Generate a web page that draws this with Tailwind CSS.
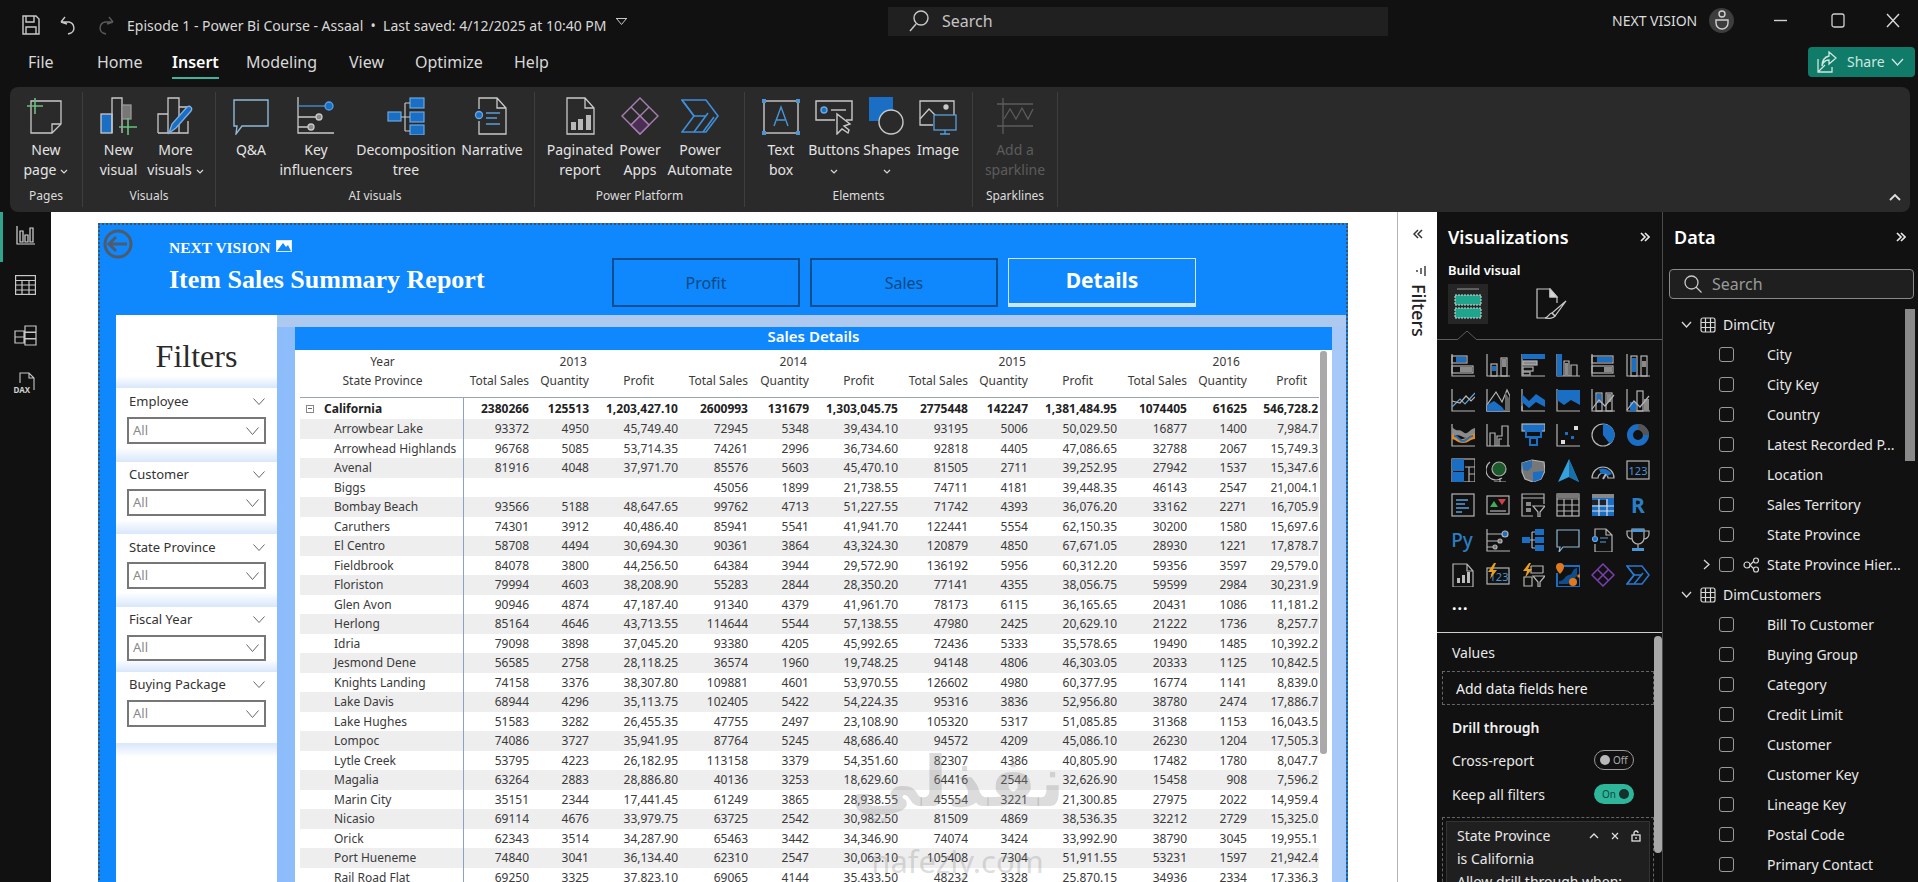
<!DOCTYPE html>
<html lang="en">
<head>
  <meta charset="UTF-8">
  <title>Power BI - Item Sales Summary Report</title>
  <script src="https://cdn.jsdelivr.net/npm/@tailwindcss/browser@4"></script>
</head>
<body class="w-[1918px] h-[882px] overflow-hidden bg-[#111111] text-[#e8e8e8] font-['Noto_Sans',sans-serif] flex flex-col">

  <!-- title bar -->
  <header class="h-[50px] flex items-center shrink-0">
    <div class="w-[888px] flex items-center pl-[22px] text-[#cfcfcf]">
      <svg class="w-[18px] h-[20px]" viewBox="0 0 18 20" fill="none" stroke="#c8c8c8" stroke-width="1.4"><path d="M1 1h13l3 3v15H1z"/><path d="M4 1v6h8V1M4 19v-7h10v7"/></svg>
      <svg class="w-[17px] h-[20px] ml-[20px]" viewBox="0 0 17 20" fill="none" stroke="#c8c8c8" stroke-width="1.4"><path d="M1 7l4-5M1 7l6 2M1 7h8a6 6 0 0 1 2 11l-3 1"/></svg>
      <svg class="w-[17px] h-[20px] ml-[20px]" viewBox="0 0 17 20" fill="none" stroke="#5a5a5a" stroke-width="1.4"><path d="M16 7l-4-5M16 7l-6 2M16 7H8a6 6 0 0 0-2 11l3 1"/></svg>
      <span class="ml-[13px] text-[14px] whitespace-nowrap text-[#d8d8d8]">Episode 1 - Power Bi Course - Assaal &nbsp;•&nbsp; Last saved: 4/12/2025 at 10:40 PM</span>
      <svg class="w-[11px] h-[8px] ml-[9px] -mt-[6px]" viewBox="0 0 11 8" fill="none" stroke="#c8c8c8"><path d="M.5.5h10l-5 6z"/><path d="M0 .5h11"/></svg>
    </div>
    <div class="w-[500px] h-[29px] -mt-[8px] bg-[#202020] flex items-center pl-[21px]">
      <svg class="w-[20px] h-[22px]" viewBox="0 0 20 22" fill="none" stroke="#c8c8c8" stroke-width="1.4"><circle cx="12" cy="8" r="7"/><path d="M7 14l-6 7"/></svg>
      <span class="ml-[13px] text-[16px] text-[#c4c4c4]">Search</span>
    </div>
    <div class="flex-1 flex items-center -mt-[10px] pl-[224px]">
      <span class="text-[14px] whitespace-nowrap text-[#dcdcdc]">NEXT VISION</span>
      <div class="ml-[12px] w-[25px] h-[25px] rounded-full bg-[#3d3d3d] flex items-center justify-center">
        <svg class="w-[16px] h-[20px]" viewBox="0 0 16 20" fill="none" stroke="#d0d0d0" stroke-width="1.4"><circle cx="8" cy="4" r="3"/><path d="M2 10h12v3a6 6 0 0 1-12 0z"/></svg>
      </div>
      <svg class="w-[13px] h-[3px] ml-[40px]" viewBox="0 0 13 3"><path d="M0 1.5h13" stroke="#d0d0d0" stroke-width="1.4"/></svg>
      <svg class="w-[14px] h-[15px] ml-[44px]" viewBox="0 0 14 15" fill="none" stroke="#d0d0d0" stroke-width="1.3"><rect x="1" y="1" width="12" height="13" rx="2"/></svg>
      <svg class="w-[14px] h-[15px] ml-[41px]" viewBox="0 0 14 15" fill="none" stroke="#d8d8d8" stroke-width="1.4"><path d="M1 1l12 13M13 1L1 14"/></svg>
    </div>
  </header>

  <!-- menu tabs -->
  <nav class="h-[37px] flex items-start shrink-0 text-[16px] text-[#d8d8d8] leading-[24px]">
    <span class="ml-[28px] w-[69px]">File</span>
    <span class="w-[75px]">Home</span>
    <span class="w-[74px] font-semibold text-white"><span class="inline-block border-b-2 border-[#3cb59c] pb-[3px]">Insert</span></span>
    <span class="w-[103px]">Modeling</span>
    <span class="w-[66px]">View</span>
    <span class="w-[99px]">Optimize</span>
    <span>Help</span>
    <div class="ml-auto mr-[3px] -mt-[3px] w-[107px] h-[30px] rounded-[4px] bg-[#0f7b68] flex items-center pl-[9px] text-[14px] text-[#cfe6e0]">
      <svg class="w-[20px] h-[22px]" viewBox="0 0 20 22" fill="none" stroke="#cfe6e0" stroke-width="1.3"><path d="M1 8v13h14v-5M1 21l7-7"/><path d="M12 1l7 6-7 6V9c-4 0-6 2-7 6 0-6 3-9 7-10z"/></svg>
      <span class="ml-[10px]">Share</span>
      <svg class="w-[13px] h-[8px] ml-[6px]" viewBox="0 0 13 8" fill="none" stroke="#cfe6e0" stroke-width="1.3"><path d="M1 1l5.500 6L12 1"/></svg>
    </div>
  </nav>

  <!-- ribbon -->
  <section class="relative h-[125px] ml-[10px] mr-[8px] shrink-0 bg-[#2a2a2a] rounded-[8px] flex pt-[5px] text-[14px] leading-[20px] text-[#e4e4e4] text-center">

    <div class="w-[73px] h-[115px] border-r border-[#3e3e3e] flex flex-col">
      <div class="h-[95px] flex">
        <div class="w-[72px] pt-[5px] flex flex-col items-center">
          <svg class="w-[38px] h-[38px]" viewBox="0 0 38 38" fill="none" stroke="#c9c9c9" stroke-width="1.3"><path d="M4 4h30v23l-9 9H4z"/><path d="M34 27h-9v9"/><path d="M0 9h16M8 1v16" stroke="#6bbf80" stroke-width="1.6"/></svg>
          <div class="mt-[5px]">New<br>page<svg class="inline w-[8px] h-[5px] ml-[4px]" viewBox="0 0 8 5" fill="none" stroke="#d8d8d8" stroke-width="1.200"><path d="M1 1l3 3 3-3"/></svg></div>
        </div>
      </div>
      <div class="text-[12px] leading-[18px] text-[#dcdcdc]">Pages</div>
    </div>

    <div class="w-[133px] h-[115px] border-r border-[#3e3e3e] flex flex-col">
      <div class="h-[95px] flex pl-[7px]">
        <div class="w-[57px] pt-[5px] flex flex-col items-center">
          <svg class="w-[38px] h-[38px]" viewBox="0 0 38 38" fill="none" stroke="#c9c9c9" stroke-width="1.3"><rect x="1" y="17" width="11" height="19" fill="#1a6fc4" stroke="#c9c9c9"/><path d="M12 36V1h10v35"/><rect x="22" y="8" width="9" height="14" fill="#777" stroke="#999"/><path d="M19 30h18M28 21v17" stroke="#6bbf80" stroke-width="1.6"/></svg>
          <div class="mt-[5px]">New<br>visual</div>
        </div>
        <div class="w-[57px] pt-[5px] flex flex-col items-center">
          <svg class="w-[38px] h-[38px]" viewBox="0 0 38 38" fill="none" stroke="#c9c9c9" stroke-width="1.3"><path d="M1 36V17h10M11 36V1h11v35M22 10h8v4M1 36h30v-12"/><path d="M12 36l3-9 15-17c3-2 6 1 4 4L19 31z" fill="#1a6fc4" stroke="#7fb2e0"/></svg>
          <div class="mt-[5px] whitespace-nowrap">More<br>visuals<svg class="inline w-[8px] h-[5px] ml-[4px]" viewBox="0 0 8 5" fill="none" stroke="#d8d8d8" stroke-width="1.200"><path d="M1 1l3 3 3-3"/></svg></div>
        </div>
      </div>
      <div class="text-[12px] leading-[18px] text-[#dcdcdc]">Visuals</div>
    </div>

    <div class="w-[319px] h-[115px] border-r border-[#3e3e3e] flex flex-col">
      <div class="h-[95px] flex pl-[4px]">
        <div class="w-[62px] pt-[5px] flex flex-col items-center">
          <svg class="w-[38px] h-[38px]" viewBox="0 0 38 38" fill="none" stroke="#8fb9d8" stroke-width="1.4"><path d="M2 3h34v26H10l-6 8 1-8H2z"/></svg>
          <div class="mt-[5px]">Q&amp;A</div>
        </div>
        <div class="w-[68px] pt-[5px] flex flex-col items-center">
          <svg class="w-[38px] h-[38px]" viewBox="0 0 38 38" fill="none" stroke="#c9c9c9" stroke-width="1.3"><path d="M1 0v36h36"/><path d="M1 9h28" stroke="#4a94d8"/><circle cx="32" cy="9" r="4" fill="#1a6fc4" stroke="#5aa0e0"/><path d="M1 20h19M1 30h11"/><circle cx="22" cy="20" r="3" fill="#888"/><circle cx="14" cy="30" r="3" fill="#888"/></svg>
          <div class="mt-[5px]">Key<br>influencers</div>
        </div>
        <div class="w-[112px] pt-[5px] flex flex-col items-center">
          <svg class="w-[38px] h-[38px]" viewBox="0 0 38 38" fill="#1a6fc4" stroke="#6aa8e0" stroke-width="1.2"><rect x="1" y="15" width="13" height="9"/><rect x="23" y="1" width="14" height="10"/><rect x="23" y="15" width="14" height="10"/><rect x="23" y="28" width="14" height="10"/><path d="M14 20h9M18 6v28M18 6h5M18 34h5" fill="none" stroke="#c9c9c9"/></svg>
          <div class="mt-[5px]">Decomposition<br>tree</div>
        </div>
        <div class="w-[60px] pt-[5px] flex flex-col items-center">
          <svg class="w-[38px] h-[38px]" viewBox="0 0 38 38" fill="none" stroke="#c9c9c9" stroke-width="1.3"><path d="M6 12V1h18l9 10v26H6v-13M24 1v10h9"/><circle cx="6" cy="18" r="3.500" fill="#1a6fc4" stroke="#6aa8e0"/><path d="M13 16h14M13 21h11M13 27h14" stroke="#5a9fd8"/></svg>
          <div class="mt-[5px]">Narrative</div>
        </div>
      </div>
      <div class="text-[12px] leading-[18px] text-[#dcdcdc]">AI visuals</div>
    </div>

    <div class="w-[210px] h-[115px] border-r border-[#3e3e3e] flex flex-col">
      <div class="h-[95px] flex pl-[11px]">
        <div class="w-[68px] pt-[5px] flex flex-col items-center">
          <svg class="w-[38px] h-[38px]" viewBox="0 0 38 38" fill="none" stroke="#c9c9c9" stroke-width="1.3"><path d="M6 37V1h18l9 10v26zM24 1v10h9"/><path d="M10 33v-8h5v8zM17 33V22h5v11zM25 33V18h5v15z" fill="#b8b8b8" stroke="none"/></svg>
          <div class="mt-[5px]">Paginated<br>report</div>
        </div>
        <div class="w-[52px] pt-[5px] flex flex-col items-center">
          <svg class="w-[38px] h-[38px]" viewBox="0 0 38 38" fill="none" stroke="#a77fb5" stroke-width="1.4"><path d="M19 1l18 18-18 18L1 19z"/><path d="M10 10l18 18M28 10L10 28"/><path d="M19 19l9 9-9 9-9-9z" fill="#4a2f52"/></svg>
          <div class="mt-[5px]">Power<br>Apps</div>
        </div>
        <div class="w-[68px] pt-[5px] flex flex-col items-center">
          <svg class="w-[38px] h-[38px]" viewBox="0 0 38 38" fill="none" stroke="#3f8ed8" stroke-width="1.6"><path d="M1 3h24l12 16-12 16H1l12-16z"/><path d="M13 35l14-19M22 35l11-15M1 3l12 16h12"/></svg>
          <div class="mt-[5px]">Power<br>Automate</div>
        </div>
      </div>
      <div class="text-[12px] leading-[18px] text-[#dcdcdc]">Power Platform</div>
    </div>

    <div class="w-[228px] h-[115px] border-r border-[#3e3e3e] flex flex-col">
      <div class="h-[95px] flex pl-[11px]">
        <div class="w-[50px] pt-[5px] flex flex-col items-center">
          <svg class="w-[38px] h-[38px]" viewBox="0 0 38 38" fill="none" stroke="#c9c9c9" stroke-width="1.4"><rect x="2" y="4" width="34" height="32"/><path d="M0 2h4v4H0zM34 2h4v4h-4zM0 34h4v4H0zM34 34h4v4h-4z" fill="#4a94d8" stroke="none"/><path d="M12 29l7-19 7 19M15 23h8" stroke="#4a94d8"/></svg>
          <div class="mt-[5px]">Text<br>box</div>
        </div>
        <div class="w-[56px] pt-[5px] flex flex-col items-center">
          <svg class="w-[38px] h-[38px]" viewBox="0 0 38 38" fill="none" stroke="#c9c9c9" stroke-width="1.4"><path d="M20 23H1V4h36v19h-6"/><circle cx="9" cy="13" r="3" fill="#1a6fc4" stroke="#6aa8e0"/><path d="M16 13h15"/><path d="M22 17v20l5-5 6 4 1-3-5-4 6-2z" fill="#2a2a2a"/></svg>
          <div class="mt-[5px]">Buttons<br><svg class="inline w-[8px] h-[5px]" viewBox="0 0 8 5" fill="none" stroke="#d8d8d8" stroke-width="1.200"><path d="M1 1l3 3 3-3"/></svg></div>
        </div>
        <div class="w-[50px] pt-[5px] flex flex-col items-center">
          <svg class="w-[38px] h-[38px]" viewBox="0 0 38 38"><rect x="1" y="0" width="24" height="24" fill="#1a6fc4"/><circle cx="23" cy="25" r="12" fill="#2a2a2a" stroke="#c9c9c9" stroke-width="1.4"/></svg>
          <div class="mt-[5px]">Shapes<br><svg class="inline w-[8px] h-[5px]" viewBox="0 0 8 5" fill="none" stroke="#d8d8d8" stroke-width="1.200"><path d="M1 1l3 3 3-3"/></svg></div>
        </div>
        <div class="w-[52px] pt-[5px] flex flex-col items-center">
          <svg class="w-[38px] h-[38px]" viewBox="0 0 38 38" fill="none" stroke="#c9c9c9" stroke-width="1.3"><path d="M14 28H1V4h34v15"/><path d="M1 22l9-10 7 7"/><circle cx="27" cy="10" r="2" fill="#c9c9c9"/><rect x="15" y="18" width="22" height="15" fill="#2a2a2a" stroke="#5a9fd8"/><path d="M26 33v4M21 37h10" stroke="#5a9fd8"/></svg>
          <div class="mt-[5px]">Image</div>
        </div>
      </div>
      <div class="text-[12px] leading-[18px] text-[#dcdcdc]">Elements</div>
    </div>

    <div class="w-[85px] h-[115px] border-r border-[#3e3e3e] flex flex-col">
      <div class="h-[95px] flex pl-[10px]">
        <div class="w-[64px] pt-[5px] flex flex-col items-center text-[#5c5c5c]">
          <svg class="w-[38px] h-[38px]" viewBox="0 0 38 38" fill="none" stroke="#5c5c5c" stroke-width="1.3"><path d="M1 7h36M1 29h36M7 1v36"/><path d="M8 22l6-10 6 10 6-11 6 11 5-10"/></svg>
          <div class="mt-[5px] whitespace-nowrap">Add a<br>sparkline</div>
        </div>
      </div>
      <div class="text-[12px] leading-[18px] text-[#dcdcdc]">Sparklines</div>
    </div>

    <svg class="absolute right-[9px] bottom-[11px] w-[12px] h-[8px]" viewBox="0 0 12 8" fill="none" stroke="#e0e0e0" stroke-width="1.800"><path d="M1 7l5-5 5 5"/></svg>
  </section>

  <!-- main -->
  <main class="flex h-[670px] shrink-0 overflow-hidden">

    <!-- view rail -->
    <div class="w-[51px] shrink-0 relative flex flex-col items-center pt-[12px] gap-[22px]">
      <div class="absolute left-0 top-0 w-[3px] h-[50px] bg-[#2fa58b]"></div>
      <svg class="w-[20px] h-[20px] ml-[1px] mt-[1px]" viewBox="0 0 20 20" fill="none" stroke="#d8d8d8" stroke-width="1.200"><path d="M1 1v18h18"/><path d="M4 6h3v11H4zM9 10h3v7H9zM14 3h3v14h-3z"/></svg>
      <svg class="w-[21px] h-[20px] mt-[8px]" viewBox="0 0 21 20" fill="none" stroke="#c8c8c8" stroke-width="1.200"><rect x=".6" y=".6" width="19.800" height="18.800"/><path d="M.6 5.500h19.800M.6 10h19.800M.6 15h19.800M7 5.500V19M14 5.500V19" /></svg>
      <svg class="w-[23px] h-[23px] mt-[7px]" viewBox="0 0 23 23" fill="none" stroke="#c8c8c8" stroke-width="1.200"><path d="M11 2h11v6H11zM11 8.500h11v6H11zM11 15h11v6H11zM1 7h9v6H1zM1 13h9v6H1z"/></svg>
      <div class="relative w-[24px] h-[24px] mt-[3px]">
        <svg class="w-[22px] h-[22px] ml-[2px]" viewBox="0 0 22 22" fill="none" stroke="#c8c8c8" stroke-width="1.100"><path d="M4 11V1h9l5 5v12M13 1v5h5"/></svg>
        <span class="absolute left-0 bottom-[2px] text-[8px] leading-[8px] font-bold text-[#d0d0d0]">DAX</span>
      </div>
    </div>

    <!-- report canvas -->
    <div class="w-[1346px] shrink-0 bg-white pl-[47px] pt-[11px]">
      <div class="w-[1250px] h-[680px] border-t-2 border-l-2 border-r-2 border-dotted border-[#44505c] bg-[#0f87fd] flex flex-col text-[#333333]">

        <!-- report header -->
        <div class="h-[90px] shrink-0 flex relative">
          <svg class="absolute left-[3px] top-[4px] w-[30px] h-[30px]" viewBox="0 0 30 30" fill="none" stroke="#4f5b68" stroke-width="3"><circle cx="15" cy="15" r="13"/><path d="M24 15H7M13 8l-7 7 7 7"/></svg>
          <div class="ml-[69px] w-[443px] pt-[11px] text-white font-['Liberation_Serif',serif] font-bold">
            <div class="flex items-center text-[15.500px] leading-[20px] h-[24px]">NEXT VISION
              <svg class="w-[16px] h-[12px] ml-[5px] -mt-[4px]" viewBox="0 0 16 12"><rect x=".5" y=".5" width="15" height="11" fill="#ffffff" stroke="#dbeafe"/><path d="M1 11l6-8 3 4 2-2 3 6z" fill="#0f87fd"/></svg>
            </div>
            <div class="text-[26px] leading-[30px] mt-[5px] whitespace-nowrap">Item Sales Summary Report</div>
          </div>
          <div class="flex gap-[10px] pt-[33px] h-[83px] text-[16px]">
            <div class="w-[188px] h-[49px] border-2 border-[#0b4e92] flex items-center justify-center text-[#0a4a85]">Profit</div>
            <div class="w-[188px] h-[49px] border-2 border-[#0b4e92] flex items-center justify-center text-[#0a4a85]">Sales</div>
            <div class="w-[188px] h-[49px] border border-[#cfe6ff] border-b-[4px] flex items-center justify-center text-white text-[21px] font-bold">Details</div>
          </div>
        </div>

        <!-- report body -->
        <div class="flex-1 flex min-h-0 pl-[16px]">

          <!-- filters column -->
          <div class="w-[161px] shrink-0 bg-white flex flex-col">
            <div class="h-[61px] flex items-center justify-center font-['Liberation_Serif',serif] text-[32px] text-[#2a2a2a] pt-[21px]">Filters</div>
            <div class="h-[12px] bg-gradient-to-b from-white to-[#d8e7fb]"></div>

            <div class="h-[74px] px-[11px] pt-[4px] bg-gradient-to-b from-white via-white via-80% to-[#d8e7fb]">
              <div class="flex items-center justify-between pl-[2px] pr-[1px] text-[13px] leading-[18px]"><span>Employee</span><svg class="w-[12px] h-[7px]" viewBox="0 0 12 7" fill="none" stroke="#666"><path d="M.5.5l5.500 6 5.500-6"/></svg></div>
              <div class="mt-[7px] h-[27px] bg-white border-2 border-[#777777] flex items-center justify-between pl-[4px] pr-[5px] text-[13px] text-[#8a8a8a]"><span>All</span><svg class="w-[13px] h-[8px]" viewBox="0 0 13 8" fill="none" stroke="#666"><path d="M.5.500l6 7 6-7"/></svg></div>
            </div>
            <div class="h-[72px] px-[11px] pt-[3px] bg-gradient-to-b from-white via-white via-80% to-[#d8e7fb]">
              <div class="flex items-center justify-between pl-[2px] pr-[1px] text-[13px] leading-[18px]"><span>Customer</span><svg class="w-[12px] h-[7px]" viewBox="0 0 12 7" fill="none" stroke="#666"><path d="M.5.5l5.500 6 5.500-6"/></svg></div>
              <div class="mt-[6px] h-[27px] bg-white border-2 border-[#777777] flex items-center justify-between pl-[4px] pr-[5px] text-[13px] text-[#8a8a8a]"><span>All</span><svg class="w-[13px] h-[8px]" viewBox="0 0 13 8" fill="none" stroke="#666"><path d="M.5.500l6 7 6-7"/></svg></div>
            </div>
            <div class="h-[73px] px-[11px] pt-[4px] bg-gradient-to-b from-white via-white via-80% to-[#d8e7fb]">
              <div class="flex items-center justify-between pl-[2px] pr-[1px] text-[13px] leading-[18px]"><span>State Province</span><svg class="w-[12px] h-[7px]" viewBox="0 0 12 7" fill="none" stroke="#666"><path d="M.5.5l5.500 6 5.500-6"/></svg></div>
              <div class="mt-[6px] h-[27px] bg-white border-2 border-[#777777] flex items-center justify-between pl-[4px] pr-[5px] text-[13px] text-[#8a8a8a]"><span>All</span><svg class="w-[13px] h-[8px]" viewBox="0 0 13 8" fill="none" stroke="#666"><path d="M.5.500l6 7 6-7"/></svg></div>
            </div>
            <div class="h-[65px] px-[11px] pt-[3px] bg-gradient-to-b from-white via-white via-80% to-[#d8e7fb]">
              <div class="flex items-center justify-between pl-[2px] pr-[1px] text-[13px] leading-[18px]"><span>Fiscal Year</span><svg class="w-[12px] h-[7px]" viewBox="0 0 12 7" fill="none" stroke="#666"><path d="M.5.5l5.500 6 5.500-6"/></svg></div>
              <div class="mt-[7px] h-[26px] bg-white border-2 border-[#777777] flex items-center justify-between pl-[4px] pr-[5px] text-[13px] text-[#8a8a8a]"><span>All</span><svg class="w-[13px] h-[8px]" viewBox="0 0 13 8" fill="none" stroke="#666"><path d="M.5.500l6 7 6-7"/></svg></div>
            </div>
            <div class="h-[71px] px-[11px] pt-[3px]">
              <div class="flex items-center justify-between pl-[2px] pr-[1px] text-[13px] leading-[18px]"><span>Buying Package</span><svg class="w-[12px] h-[7px]" viewBox="0 0 12 7" fill="none" stroke="#666"><path d="M.5.5l5.500 6 5.500-6"/></svg></div>
              <div class="mt-[7px] h-[27px] bg-white border-2 border-[#777777] flex items-center justify-between pl-[4px] pr-[5px] text-[13px] text-[#8a8a8a]"><span>All</span><svg class="w-[13px] h-[8px]" viewBox="0 0 13 8" fill="none" stroke="#666"><path d="M.5.500l6 7 6-7"/></svg></div>
            </div>
            <div class="h-[14px] bg-gradient-to-b from-[#d8e7fb] to-white"></div>
            <div class="flex-1"></div>
          </div>

          <!-- table area -->
          <div class="flex-1 flex flex-col bg-[#a9c9f7] bg-gradient-to-r from-[#8cbcfb] via-[#c6d9f8] to-[#a6c8f8]">
            <div class="h-[12px] shrink-0 bg-[#aec9f0]"></div>
            <div class="ml-[18px] mr-[14px] flex-1 flex flex-col min-h-0 bg-white relative overflow-hidden">
              <div class="h-[23px] shrink-0 bg-[#0f87fd] text-white text-[15px] font-semibold text-center leading-[19px]">Sales Details</div>
              <div id="matrix" class="pl-[5px] text-[12px] text-[#3a3a3a]"></div>
              <div class="absolute left-[1025px] top-[24px] w-[7px] h-[403px] rounded-[3px] bg-[#a9a9a9]"></div>
              <div class="absolute left-[168px] top-[71px] w-px h-[520px] bg-[#8aa2c4]"></div>
              <div class="absolute left-[555px] top-[420px] w-[215px] text-center text-[#8a8a8a]/30 leading-none pointer-events-none">
                <div class="font-['DejaVu_Sans',sans-serif] font-bold text-[70px] h-[76px]">نفذلي</div>
                <div class="font-['Noto_Sans',sans-serif] text-[31px] mt-[23px]">nafezly.com</div>
              </div>
            </div>
          </div>
        </div>
      </div>
    </div>

    <!-- collapsed filter pane -->
    <div class="w-[40px] shrink-0 bg-white border-l border-[#b5b5b5] flex flex-col items-center text-[#222222]">
      <svg class="w-[10px] h-[10px] mt-[17px]" viewBox="0 0 10 10" fill="none" stroke="#333" stroke-width="1.500"><path d="M5 1L1 5l4 4M9 1L5 5l4 4"/></svg>
      <svg class="w-[10px] h-[12px] mt-[26px] ml-[6px]" viewBox="0 0 10 12" stroke="#333" stroke-width="1.400"><path d="M9 1v10M5 3v6M1 5v2"/></svg>
      <span class="mt-[7px] ml-[2px] text-[18px] font-medium [writing-mode:vertical-rl] leading-none">Filters</span>
    </div>

    <!-- visualizations pane -->
    <aside class="w-[226px] shrink-0 border-r border-[#4a4a4a] relative overflow-hidden">
      <div class="flex items-center justify-between pl-[11px] pr-[12px] h-[50px]">
        <span class="text-[18px] font-semibold text-white">Visualizations</span>
        <svg class="w-[10px] h-[10px]" viewBox="0 0 10 10" fill="none" stroke="#e8e8e8" stroke-width="1.700"><path d="M1 1l4 4-4 4M5 1l4 4-4 4"/></svg>
      </div>
      <div class="pl-[11px] text-[13px] leading-[18px] font-semibold text-white -mt-[1px]">Build visual</div>
      <div class="relative h-[56px] mt-[5px] border-b border-[#5c5c5c] flex pl-[11px]">
        <div class="w-[40px] h-[40px] bg-[#262626] flex items-center justify-center">
          <svg class="w-[30px] h-[32px]" viewBox="0 0 30 32"><path d="M4 1h22" stroke="#999" stroke-width="1"/><rect x="2" y="7" width="26" height="10" fill="#1fa58c" stroke="#ddd" stroke-dasharray="2 1"/><rect x="2" y="20" width="26" height="10" fill="#1fa58c" stroke="#ddd" stroke-dasharray="2 1"/></svg>
        </div>
        <svg class="w-[32px] h-[32px] ml-[47px] mt-[4px]" viewBox="0 0 32 32" fill="none" stroke="#c8c8c8" stroke-width="1.200"><path d="M12 30H2V1h13l7 8v6M15 1v8h7" /><path d="M15 1l7 8h-7z" fill="#d8d8d8"/><path d="M31 13L17 25l3 3z"/><path d="M17 25c-3 0-3 4-7 5 4 1 9 0 10-2z"/></svg>
        <svg class="absolute left-[20px] -bottom-[1px] w-[20px] h-[10px]" viewBox="0 0 20 10" fill="#111111" stroke="#5c5c5c"><path d="M0 10l10-9 10 9"/></svg>
      </div>
      <div id="vizGrid" class="grid grid-cols-[repeat(6,35px)] auto-rows-[35px] pl-[14px] pt-[13px]"></div>
      <div class="pl-[15px] h-[23px] text-[16px] font-bold leading-[12px] tracking-[1px] text-white">...</div>

      <div class="absolute left-0 right-0 top-[420px] bottom-0 border-t border-[#cfcfcf] text-[14px]">
        <div class="absolute left-[217px] top-[3px] w-[8px] h-[217px] rounded-[4px] bg-[#a8a8a8]"></div>
        <div class="pl-[15px] pt-[11px] leading-[18px] text-[#e8e8e8]">Values</div>
        <div class="ml-[5px] mt-[9px] w-[212px] h-[34px] border border-dashed border-[#666666] pl-[13px] flex items-center text-[#f0f0f0]">Add data fields here</div>
        <div class="pl-[15px] mt-[14px] leading-[18px] font-semibold text-[#f0f0f0]">Drill through</div>
        <div class="flex items-center justify-between pl-[15px] pr-[28px] mt-[13px] h-[20px]">
          <span>Cross-report</span>
          <div class="w-[40px] h-[20px] rounded-full border border-[#999999] flex items-center pl-[5px] text-[10px] text-[#aaaaaa] gap-[3px]"><span class="w-[10px] h-[10px] rounded-full bg-[#b8b8b8]"></span>Off</div>
        </div>
        <div class="flex items-center justify-between pl-[15px] pr-[28px] mt-[14px] h-[20px]">
          <span>Keep all filters</span>
          <div class="w-[40px] h-[20px] rounded-full bg-[#2eb69b] flex items-center justify-end pr-[5px] text-[10px] text-[#0d4a40] gap-[3px]">On<span class="w-[10px] h-[10px] rounded-full bg-[#16302c]"></span></div>
        </div>
        <div class="ml-[5px] mt-[13px] w-[212px] border border-dashed border-[#666666] p-[3px] pb-0">
          <div class="bg-[#1f1f1f] border border-[#333333] pl-[10px] pr-[8px] pt-[2px] h-[70px] leading-[23px]">
            <div class="flex items-center justify-between">
              <span>State Province</span>
              <span class="flex items-center gap-[12px]">
                <svg class="w-[10px] h-[6px]" viewBox="0 0 10 6" fill="none" stroke="#e0e0e0" stroke-width="1.300"><path d="M1 5l4-4 4 4"/></svg>
                <svg class="w-[8px] h-[8px]" viewBox="0 0 8 8" stroke="#e0e0e0" stroke-width="1.200"><path d="M1 1l6 6M7 1L1 7"/></svg>
                <svg class="w-[10px] h-[12px]" viewBox="0 0 10 12" fill="none" stroke="#e0e0e0" stroke-width="1.300"><rect x="1" y="5" width="8" height="6"/><path d="M3 5V3a2 2 0 0 1 4 0"/><path d="M5 7v2"/></svg>
              </span>
            </div>
            <div>is California</div>
            <div class="whitespace-nowrap">Allow drill through when:</div>
          </div>
        </div>
      </div>
    </aside>

    <!-- data pane -->
    <aside class="flex-1 relative overflow-hidden">
      <div class="flex items-center justify-between pl-[11px] pr-[12px] h-[50px]">
        <span class="text-[18px] font-semibold text-white">Data</span>
        <svg class="w-[10px] h-[10px]" viewBox="0 0 10 10" fill="none" stroke="#e8e8e8" stroke-width="1.700"><path d="M1 1l4 4-4 4M5 1l4 4-4 4"/></svg>
      </div>
      <div class="ml-[6px] mt-[7px] w-[245px] h-[30px] rounded-[4px] border border-[#8a8a8a] bg-[#1f1f1f] flex items-center pl-[14px]">
        <svg class="w-[18px] h-[18px]" viewBox="0 0 18 18" fill="none" stroke="#c8c8c8" stroke-width="1.300"><circle cx="7.500" cy="7.500" r="6.500"/><path d="M12 12l5.500 5.500"/></svg>
        <span class="ml-[10px] text-[16px] text-[#9a9a9a]">Search</span>
      </div>
      <div id="fields" class="mt-[11px] text-[14px] text-[#e8e8e8]"></div>
      <div class="absolute left-[242px] top-[97px] w-[10px] h-[152px] bg-[#8a8a8a]"></div>
    </aside>
  </main>

  <script>
    // matrix data: name, then sales / quantity / profit for 2013-2016
    const rows = `Arrowbear Lake|93372|4950|45,749.40|72945|5348|39,434.10|93195|5006|50,029.50|16877|1400|7,984.7
Arrowhead Highlands|96768|5085|53,714.35|74261|2996|36,734.60|92818|4405|47,086.65|32788|2067|15,749.3
Avenal|81916|4048|37,971.70|85576|5603|45,470.10|81505|2711|39,252.95|27942|1537|15,347.6
Biggs||||45056|1899|21,738.55|74711|4181|39,448.35|46143|2547|21,004.1
Bombay Beach|93566|5188|48,647.65|99762|4713|51,227.55|71742|4393|36,076.20|33162|2271|16,705.9
Caruthers|74301|3912|40,486.40|85941|5541|41,941.70|122441|5554|62,150.35|30200|1580|15,697.6
El Centro|58708|4494|30,694.30|90361|3864|43,324.30|120879|4850|67,671.05|28930|1221|17,878.7
Fieldbrook|84078|3800|44,256.50|64384|3944|29,572.90|136192|5956|60,312.20|59356|3597|29,579.0
Floriston|79994|4603|38,208.90|55283|2844|28,350.20|77141|4355|38,056.75|59599|2984|30,231.9
Glen Avon|90946|4874|47,187.40|91340|4379|41,961.70|78173|6115|36,165.65|20431|1086|11,181.2
Herlong|85164|4646|43,713.55|114644|5544|57,138.55|47980|2425|20,629.10|21222|1736|8,257.7
Idria|79098|3898|37,045.20|93380|4205|45,992.65|72436|5333|35,578.65|19490|1485|10,392.2
Jesmond Dene|56585|2758|28,118.25|36574|1960|19,748.25|94148|4806|46,303.05|20333|1125|10,842.5
Knights Landing|74158|3376|38,307.80|109881|4601|53,970.55|126602|4980|60,377.95|16774|1141|8,839.0
Lake Davis|68944|4296|35,113.75|102405|5422|54,224.35|95316|3836|52,956.80|38780|2474|17,886.7
Lake Hughes|51583|3282|26,455.35|47755|2497|23,108.90|105320|5317|51,085.85|31368|1153|16,043.5
Lompoc|74086|3727|35,941.95|87764|5245|48,686.40|94572|4209|45,086.10|26230|1204|17,505.3
Lytle Creek|53795|4223|26,182.95|113158|3379|54,351.60|82307|4386|40,805.90|17482|1780|8,047.7
Magalia|63264|2883|28,886.80|40136|3253|18,629.60|64416|2544|32,626.90|15458|908|7,596.2
Marin City|35151|2344|17,441.45|61249|3865|28,938.55|45554|3221|21,300.85|27975|2022|14,959.4
Nicasio|69114|4676|33,979.75|63725|2542|30,982.50|81509|4869|38,536.35|32212|2729|15,325.0
Orick|62343|3514|34,287.90|65463|3442|34,346.90|74074|3424|33,992.90|38790|3045|19,955.1
Port Hueneme|74840|3041|36,134.40|62310|2547|30,063.10|105408|7304|51,911.55|53231|1597|21,942.4
Rail Road Flat|69250|3325|37,823.10|69065|4144|35,433.50|48232|3328|25,870.15|34936|2334|17,336.3`.split('\n').map(l => l.split('|'));

    const cols = 'grid grid-cols-[163px_66px_60px_89px_70px_61px_89px_70px_60px_89px_70px_60px_71px] w-[1019px]';
    const cell = (t, extra = '') => `<div class="text-right whitespace-nowrap overflow-hidden ${extra}">${t}</div>`;
    const measures = ['Total Sales', 'Quantity', 'Profit'];

    let html = `<div class="${cols} h-[19px] leading-[19px] mt-[2px]">
      <div class="text-center pl-[2px]">Year</div><div></div>${cell('2013', 'pr-[2px]')}<div></div><div></div>${cell('2014', 'pr-[2px]')}<div></div><div></div>${cell('2015', 'pr-[2px]')}<div></div><div></div>${cell('2016', 'pr-[7px]')}<div></div></div>`;
    html += `<div class="${cols} h-[27px] leading-[19px] border-b border-[#9aa5b1]"><div class="text-center pl-[2px]">State Province</div>`;
    for (let y = 0; y < 4; y++) measures.forEach(m => html += cell(m, m !== 'Profit' ? '' : y === 3 ? 'pr-[11px]' : 'pr-[24px]'));
    html += '</div>';

    const california = ['2380266','125513','1,203,427.10','2600993','131679','1,303,045.75','2775448','142247','1,381,484.95','1074405','61625','546,728.2'];
    html += `<div class="${cols} h-[21px] leading-[21px] font-bold text-[#222222]"><div class="pl-[6px] flex items-center"><span class="w-[8px] h-[8px] border border-[#888888] mr-[10px] flex items-center justify-center"><span class="w-[4px] h-px bg-[#666666]"></span></span>California</div>${california.map(v => cell(v)).join('')}</div>`;

    rows.forEach((r, i) => {
      const stripe = i % 2 === 0 ? 'bg-[#eeeeee]' : '';
      html += `<div class="${cols} h-[19.5px] leading-[19.5px] ${stripe}"><div class="pl-[34px] whitespace-nowrap">${r[0]}</div>${r.slice(1).map(v => cell(v)).join('')}</div>`;
    });
    document.getElementById('matrix').innerHTML = html;

    // visualization gallery
    const B = '#1a6fc4', G = '#8a8a8a';
    const ax = '<path d="M1 1v22h23"/>';
    const viz = [
      `${ax}<rect x="1" y="3" width="15" height="7"/><rect x="5" y="4" width="10" height="5" fill="${B}" stroke="none"/><rect x="1" y="13" width="21" height="7"/><rect x="9" y="14" width="12" height="5" fill="${G}" stroke="none"/>`,
      `${ax}<rect x="5" y="11" width="6" height="12"/><rect x="6" y="13" width="4" height="5" fill="${B}" stroke="none"/><rect x="15" y="5" width="6" height="18"/><rect x="16" y="6" width="4" height="8" fill="${G}" stroke="none"/>`,
      `<path d="M1 1v22h23"/><rect x="1" y="1" width="23" height="5" fill="${B}" stroke="none"/><rect x="2" y="8" width="14" height="4" fill="${G}"/><rect x="2" y="14" width="10" height="4" fill="none"/><rect x="2" y="19" width="7" height="3"/>`,
      `${ax}<rect x="1" y="1" width="5" height="22" fill="${B}" stroke="none"/><path d="M8 23V8h5v15M15 23V12h6v11"/><rect x="9" y="10" width="3" height="13" fill="${G}" stroke="none"/>`,
      `${ax}<rect x="1" y="3" width="21" height="7"/><rect x="6" y="4" width="15" height="5" fill="${B}" stroke="none"/><rect x="1" y="13" width="21" height="7"/><rect x="13" y="14" width="8" height="5" fill="${G}" stroke="none"/>`,
      `${ax}<rect x="5" y="3" width="6" height="20"/><rect x="6" y="5" width="4" height="14" fill="${B}" stroke="none"/><rect x="15" y="3" width="6" height="20"/><rect x="16" y="8" width="4" height="6" fill="${G}" stroke="none"/>`,

      `${ax}<path d="M1 19l8-8 5 5 10-11" stroke="#6a9fd0"/><path d="M1 13l8 2 6-7 5 5 4-4"/>`,
      `${ax}<path d="M1 23V17l9-13 6 10 5-12 3 6v15z" fill="none"/><path d="M1 23v-6l7-4 8 6 3 4z" fill="${B}" stroke="none"/><path d="M19 4l5 8v11h-5z" fill="#666" stroke="none"/>`,
      `${ax}<path d="M1 6l7 7 7-7 9 6v7l-9-5-7 6-7-6z" fill="${B}" stroke="none"/><path d="M1 23v-5"/>`,
      `${ax}<path d="M1 2h23v15l-9-5-7 5-7-5z" fill="${B}" stroke="none"/>`,
      `${ax}<rect x="5" y="5" width="6" height="18"/><rect x="6" y="6" width="4" height="9" fill="${B}" stroke="none"/><rect x="15" y="5" width="6" height="18"/><rect x="16" y="6" width="4" height="8" fill="${G}" stroke="none"/><path d="M1 21l7-9 6 6 9-11"/>`,
      `${ax}<rect x="11" y="3" width="6" height="20"/><rect x="4" y="14" width="6" height="9" fill="${B}" stroke="none"/><rect x="18" y="11" width="5" height="12" fill="${G}" stroke="none"/><path d="M1 22l7-9 6 6 9-11"/>`,

      `${ax}<path d="M1 4c6 6 6 1 11 5s6-3 12-4v6c-6 0-6 6-12 3S6 13 1 12z" fill="${G}" stroke="none"/><path d="M1 11c6 1 6 6 11 5s7-6 12-5v5c-5 0-6 4-12 4S6 17 1 16z" fill="#e08a2a" stroke="none"/><path d="M3 13c5 0 5 5 9 5s5-5 10-5" stroke="${B}" stroke-width="2"/>`,
      `${ax}<path d="M4 23V10h5v13M11 23V13h5V3h6v20M13 23v-7h3"/>`,
      `<rect x="1" y="1" width="23" height="7" fill="${B}"/><rect x="5" y="8" width="15" height="6" fill="none" stroke="${B}" stroke-width="2"/><rect x="9" y="15" width="7" height="7" fill="none" stroke="${B}" stroke-width="2"/>`,
      `${ax}<rect x="5" y="17" width="4" height="4" fill="#ddd" stroke="none"/><rect x="9" y="9" width="3" height="3" fill="${B}" stroke="none"/><rect x="15" y="13" width="3" height="3" fill="${B}" stroke="none"/><rect x="18" y="3" width="4" height="4" fill="#ddd" stroke="none"/>`,
      `<circle cx="12" cy="12" r="11"/><path d="M12 1a11 11 0 0 1 7 20L12 12z" fill="${B}" stroke="none"/>`,
      `<circle cx="12" cy="12" r="8" fill="none" stroke="${B}" stroke-width="6"/><path d="M12 1a11 11 0 0 1 11 11h-6a5 5 0 0 0-5-5z" fill="#555" stroke="none"/>`,

      `<rect x="1" y="1" width="23" height="23"/><rect x="1" y="1" width="12" height="12" fill="${B}" stroke="none"/><rect x="1" y="14" width="12" height="10" fill="${B}" stroke="none"/><path d="M14 9h10M18 9v15M18 16h6"/>`,
      `<path d="M4 4a10 10 0 0 0 12 16M8 24h12M14 20v4"/><circle cx="13" cy="11" r="7" fill="#1c5a2c" stroke="#aaa"/>`,
      `<path d="M1 5l10-3 12 2 1 9-4 8-8 3-8-3-3-7z" fill="#777"/><path d="M1 5l10-3v7l-4 4-5-1z" fill="#2f6fae" stroke="none"/><path d="M12 14l11-1-3 8-8 3z" fill="${B}" stroke="none"/>`,
      `<path d="M13 1l10 23-10-5-11 5z" fill="#35a0dc" stroke="none"/><path d="M13 1v18l10 5z" fill="#1a6fa8" stroke="none"/>`,
      `<path d="M1 20a11 11 0 0 1 22 0h-6a5 5 0 0 0-10 0z"/><path d="M8 11a11 11 0 0 1 13 5l-5 2a5 5 0 0 0-6-2z" fill="${B}" stroke="none"/><path d="M12 21l3-5" stroke-width="2"/>`,
      `<rect x="1" y="3" width="22" height="18"/><text x="12" y="17" text-anchor="middle" font-size="11" fill="#4a94d8" stroke="none">123</text>`,

      `<rect x="1" y="1" width="22" height="22"/><path d="M5 7h12M5 11h9M5 15h13M5 19h6" stroke="#5a9fd8" stroke-width="1.600"/>`,
      `<rect x="1" y="3" width="22" height="18"/><path d="M4 14l4-6 4 6z" fill="#3fae5c" stroke="none"/><path d="M12 6h8l-4 6z" fill="#d0404a" stroke="none"/><path d="M4 18h16"/>`,
      `<path d="M1 1h22v4H1zM1 5v18h11M23 5v6"/><rect x="5" y="9" width="5" height="4" fill="${G}" stroke="none"/><rect x="5" y="15" width="5" height="4" fill="${G}" stroke="none"/><path d="M12 13h12l-5 6v5h-2v-5z"/>`,
      `<rect x="1" y="1" width="22" height="22"/><path d="M1 6h22M1 12h22M1 18h22M8 6v17M16 6v17"/><rect x="1" y="1" width="22" height="4" fill="#777" stroke="none"/>`,
      `<rect x="1" y="1" width="22" height="22" fill="${B}" stroke="none"/><rect x="1" y="1" width="22" height="4" fill="#888" stroke="none"/><rect x="1" y="7" width="6" height="5" fill="#222" stroke="none"/><rect x="8" y="7" width="7" height="5" fill="#222" stroke="none"/><path d="M1 13h22M1 18h22M8 6v17M16 6v17" stroke="#ddd"/>`,
      `<text x="12" y="20" text-anchor="middle" font-size="21" font-weight="bold" fill="#2a7fc4" stroke="none">R</text>`,

      `<text x="11" y="19" text-anchor="middle" font-size="19" fill="#2a7fc4" stroke="none" font-weight="500">Py</text>`,
      `<path d="M1 1v22h23M1 6h16M1 13h11M1 19h6"/><circle cx="19" cy="6" r="3" fill="${B}"/><circle cx="14" cy="13" r="2" fill="#777"/><circle cx="9" cy="19" r="2" fill="#777"/>`,
      `<rect x="1" y="9" width="8" height="6" fill="${B}" stroke="none"/><rect x="14" y="1" width="9" height="6" fill="${B}" stroke="none"/><rect x="14" y="9" width="9" height="6" fill="${B}" stroke="none"/><rect x="14" y="17" width="9" height="6" fill="${B}" stroke="none"/><path d="M9 12h5M11 4v16M11 4h3M11 20h3"/>`,
      `<path d="M1 2h22v17H7l-4 5 1-5H1z" stroke="#8fb9d8"/>`,
      `<path d="M4 8V1h11l6 6v17H4v-8M15 1v6h6"/><circle cx="4" cy="11" r="2.500" fill="${B}" stroke="#6aa8e0"/><path d="M9 10h8M9 14h6" stroke="#5a9fd8"/>`,
      `<path d="M6 1h12v9a6 6 0 0 1-12 0zM6 3H1v3a5 5 0 0 0 5 5M18 3h5v3a5 5 0 0 1-5 5M12 16v4"/><rect x="6" y="1" width="12" height="3" fill="#4a94d8" stroke="none"/><rect x="6" y="20" width="12" height="3" fill="#4a94d8" stroke="none"/>`,

      `<path d="M2 1h14l6 7v16H2zM16 1v7h6"/><path d="M6 20v-5h3v5zM11 20v-8h3v8zM16 20v-11h3v11z" fill="#bbb" stroke="none"/>`,
      `<rect x="1" y="5" width="22" height="16"/><text x="13" y="18" text-anchor="middle" font-size="11" fill="#4a94d8" stroke="none">123</text><path d="M8 0L2 9h4l-2 7 7-9H7l3-7z" fill="#e8a020" stroke="none"/>`,
      `<path d="M10 3h12v7M10 3v7h12M3 14h8v9H3z"/><path d="M12 13h12l-5 6v5h-2v-5z"/><path d="M8 0L2 8h4l-2 7 7-9H7l3-6z" fill="#e8a020" stroke="none"/>`,
      `<path d="M4 3h20v21H1V10" stroke="${B}" stroke-width="2"/><path d="M3 18c6 0 5-5 10-6s2-6 8-7v8l-9 8H3z" fill="#0f4e8c" stroke="none"/><path d="M4 0a4 4 0 0 1 4 4c0 3-4 7-4 7S0 7 0 4a4 4 0 0 1 4-4z" fill="#e07a20" stroke="none"/><circle cx="17" cy="19" r="4" fill="#e07a20" stroke="none"/><circle cx="23" cy="13" r="1.800" fill="#e07a20" stroke="none"/>`,
      `<g stroke="#7a3fb0" stroke-width="1.500"><path d="M12 1l11 11-11 11L1 12z"/><path d="M6.500 6.500l11 11M17.500 6.500l-11 11"/></g>`,
      `<g stroke="#2a78d0" stroke-width="1.500"><path d="M1 3h15l7 9-7 9H1l7-9z"/><path d="M1 21l8-10M8 21l9-11M1 3l7 9h8"/></g>`
    ];
    document.getElementById('vizGrid').innerHTML = viz.map(v =>
      `<svg class="w-[24px] h-[24px]" viewBox="0 0 24 24" fill="none" stroke="#b5b5b5" stroke-width="1.200">${v}</svg>`).join('');

    // data pane field list
    const chevDown = '<svg class="absolute left-[18px] top-[11px] w-[11px] h-[7px]" viewBox="0 0 11 7" fill="none" stroke="#d8d8d8" stroke-width="1.300"><path d="M1 1l4.500 5L10 1"/></svg>';
    const tableIcon = '<svg class="absolute left-[37px] top-[7px] w-[16px] h-[16px]" viewBox="0 0 16 16" fill="none" stroke="#d8d8d8" stroke-width="1.200"><rect x="1" y="1" width="14" height="14" rx="2"/><path d="M1 5.500h14M1 10.500h14M5.500 1v14M10.500 1v14"/></svg>';
    const box = '<span class="absolute left-[56px] top-[7px] w-[15px] h-[15px] rounded-[3px] border border-[#9a9a9a]"></span>';
    const fields = ['#DimCity','City','City Key','Country','Latest Recorded P...','Location','Sales Territory','State Province','>State Province Hier...','#DimCustomers','Bill To Customer','Buying Group','Category','Credit Limit','Customer','Customer Key','Lineage Key','Postal Code','Primary Contact'];
    document.getElementById('fields').innerHTML = fields.map(f => {
      if (f[0] === '#') return `<div class="relative h-[30px] leading-[30px] pl-[60px] whitespace-nowrap">${chevDown}${tableIcon}${f.slice(1)}</div>`;
      if (f[0] === '>') return `<div class="relative h-[30px] leading-[30px] pl-[104px] whitespace-nowrap"><svg class="absolute left-[40px] top-[9px] w-[7px] h-[11px]" viewBox="0 0 7 11" fill="none" stroke="#d8d8d8" stroke-width="1.300"><path d="M1 1l5 4.500L1 10"/></svg>${box}<svg class="absolute left-[80px] top-[7px] w-[17px] h-[16px]" viewBox="0 0 17 16" fill="none" stroke="#d8d8d8" stroke-width="1.200"><circle cx="4" cy="8" r="3"/><circle cx="13" cy="3.500" r="2.500"/><circle cx="13" cy="12.500" r="2.500"/><path d="M7 8l3.500-3.500M7 8l3.500 3.500"/></svg>${f.slice(1)}</div>`;
      return `<div class="relative h-[30px] leading-[30px] pl-[104px] whitespace-nowrap">${box}${f}</div>`;
    }).join('');
  </script>
</body>
</html>
